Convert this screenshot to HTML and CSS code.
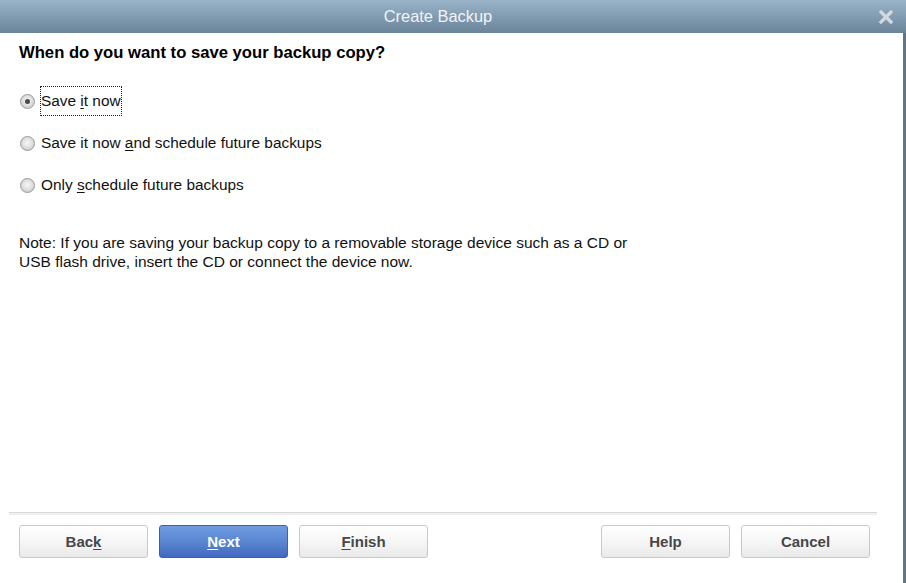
FILE: index.html
```html
<!DOCTYPE html>
<html>
<head>
<meta charset="utf-8">
<link rel="stylesheet" href="styles.css">
</head>
<body>
<div class="window">
  <div class="titlebar">
    <span class="title">Create Backup</span>
    <svg class="close" width="14" height="14" viewBox="0 0 14 14"><path d="M2 2 L12 12 M12 2 L2 12" stroke="#d3d9df" stroke-width="3.2" stroke-linecap="square"/></svg>
  </div>
  <div class="body">
    <div class="content">
      <h1 class="heading">When do you want to save your backup copy?</h1>
      <div class="options">
        <div class="option">
          <span class="radio checked"></span>
          <span class="label focus">Save <u>i</u>t now</span>
        </div>
        <div class="option">
          <span class="radio"></span>
          <span class="label">Save it now <u>a</u>nd schedule future backups</span>
        </div>
        <div class="option">
          <span class="radio"></span>
          <span class="label">Only <u>s</u>chedule future backups</span>
        </div>
      </div>
      <p class="note">Note: If you are saving your backup copy to a removable storage device such as a CD or<br>USB flash drive, insert the CD or connect the device now.</p>
      <div class="footer">
        <div class="separator"></div>
        <div class="buttons">
          <div class="group">
            <button class="btn">Bac<u>k</u></button>
            <button class="btn primary"><u>N</u>ext</button>
            <button class="btn"><u>F</u>inish</button>
          </div>
          <div class="group">
            <button class="btn">Help</button>
            <button class="btn">Cancel</button>
          </div>
        </div>
      </div>
    </div>
    <div class="edge"></div>
  </div>
</div>
</body>
</html>
```

FILE: styles.css
```css
html, body {
  margin: 0;
  padding: 0;
  background: #fff;
}
body {
  font-family: "Liberation Sans", Arial, sans-serif;
  color: #111;
}
.window {
  width: 906px;
  height: 583px;
  display: flex;
  flex-direction: column;
  overflow: hidden;
}
.titlebar {
  height: 33px;
  flex: none;
  background: linear-gradient(to bottom, #99b3c8 0%, #7f9ab0 55%, #6a8498 100%);
  display: flex;
  align-items: center;
  justify-content: center;
  position: relative;
  padding-right: 30px;
  box-sizing: border-box;
}
.title {
  color: #f2f4f6;
  font-size: 16.4px;
}
.close {
  position: absolute;
  right: 13px;
  top: 10px;
}
.body {
  flex: 1;
  display: flex;
  min-height: 0;
}
.content {
  flex: 1;
  display: flex;
  flex-direction: column;
  padding-left: 19px;
}
.edge {
  width: 3px;
  flex: none;
  background: #5f768a;
}
.heading {
  margin: 10px 0 0 0;
  font-size: 16.65px;
  line-height: 20px;
  font-weight: bold;
  color: #000;
}
.options {
  margin-top: 23px;
  display: flex;
  flex-direction: column;
  gap: 12px;
}
.option {
  height: 30px;
  display: flex;
  align-items: center;
}
.radio {
  width: 13px;
  height: 13px;
  border-radius: 50%;
  border: 1px solid #9a9a9a;
  background: radial-gradient(circle at 50% 45%, #f6f6f6 0%, #e2e2e2 45%, #bdbdbd 100%);
  margin-left: 1px;
  margin-right: 5px;
  position: relative;
  flex: none;
}
.radio.checked::after {
  content: "";
  position: absolute;
  left: 4px;
  top: 4px;
  width: 5px;
  height: 5px;
  border-radius: 50%;
  background: #4a4a4a;
}
.label {
  font-size: 15.4px;
  line-height: 18px;
  color: #111;
  padding: 5px 0;
  border: 1px dotted transparent;
}
.label.focus {
  border-color: #222;
}
.label u {
  text-underline-offset: 2px;
}
.note {
  margin: 33px 0 0 0;
  font-size: 15.5px;
  line-height: 19px;
  color: #111;
}
.footer {
  margin-top: auto;
  margin-left: -10px;
  padding-bottom: 25px;
}
.separator {
  width: 868px;
  height: 1px;
  margin-top: 1px;
  border-top: 1px solid #d6d6d6;
  border-bottom: 1px solid #ececec;
  background: #f4f4f4;
}
.buttons {
  margin-top: 10px;
  padding-left: 10px;
  padding-right: 33px;
  display: flex;
  justify-content: space-between;
}
.group {
  display: flex;
  gap: 11px;
}
.btn {
  width: 129px;
  height: 33px;
  box-sizing: border-box;
  border: 1px solid #c9c9c9;
  border-radius: 3px;
  background: linear-gradient(to bottom, #ffffff 0%, #f6f6f6 50%, #e9e9e9 100%);
  font-family: "Liberation Sans", Arial, sans-serif;
  font-weight: bold;
  font-size: 15px;
  color: #474747;
  padding: 0;
  cursor: default;
}
.btn.primary {
  border-color: #3b62aa;
  background: linear-gradient(to bottom, #6f9ce0 0%, #5a86d2 50%, #4268c0 100%);
  color: #fff;
}
.btn u {
  text-underline-offset: 2px;
}
```
